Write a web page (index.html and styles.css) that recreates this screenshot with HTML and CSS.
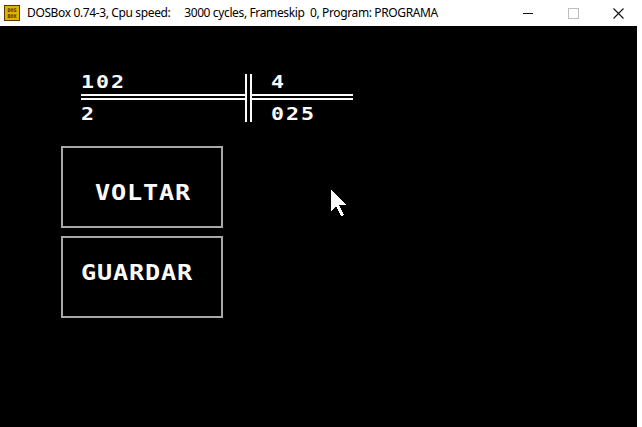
FILE: index.html
```html
<!DOCTYPE html>
<html>
<head>
<meta charset="utf-8">
<link rel="stylesheet" href="styles.css">
</head>
<body>
<div class="window">
  <div class="titlebar">
    <div class="appicon"><span>DOS</span><span>BOX</span></div>
    <div class="title">DOSBox 0.74-3, Cpu speed:     3000 cycles, Frameskip  0, Program: PROGRAMA</div>
    <div class="controls">
      <div class="ctl"><svg width="11" height="11" viewBox="0 0 11 11"><rect x="0" y="5" width="10" height="1" fill="#111"/></svg></div>
      <div class="ctl"><svg width="11" height="11" viewBox="0 0 11 11"><rect x="0.5" y="0.5" width="10" height="10" fill="none" stroke="#bdbdbd"/></svg></div>
      <div class="ctl"><svg width="11" height="11" viewBox="0 0 11 11"><path d="M0.5 0.5 L10.5 10.5 M10.5 0.5 L0.5 10.5" stroke="#111" stroke-width="1.1"/></svg></div>
    </div>
  </div>
  <div class="client">
    <div class="screen">
      <div class="frac">
        <div class="num top-l"><span class="px">102</span></div>
        <div class="bars"></div>
        <div class="num top-r"><span class="px">4</span></div>
        <div class="hline hl-l"></div>
        <div class="hline hl-r"></div>
        <div class="num bot-l"><span class="px">2</span></div>
        <div class="num bot-r"><span class="px">025</span></div>
      </div>
      <div class="buttons">
        <div class="dosbtn btn-voltar"><span class="label"><span class="px">VOLTAR</span></span></div>
        <div class="dosbtn btn-guardar"><span class="label"><span class="px">GUARDAR</span></span></div>
      </div>
      <svg class="cursor" width="16" height="27" viewBox="0 0 16 27" shape-rendering="crispEdges"><polygon points="0,0 0,21 5,16 10,26 13,25 8,15 15,15" fill="#fff"/></svg>
    </div>
  </div>
</div>
</body>
</html>
```

FILE: styles.css
```css
html, body {
  margin: 0;
  padding: 0;
  background: #ffffff;
}
.window {
  width: 642px;
  height: 427px;
  display: flex;
  flex-direction: column;
  overflow: hidden;
}
.titlebar {
  height: 26px;
  flex: 0 0 26px;
  display: flex;
  align-items: center;
  background: #ffffff;
  font-family: "Noto Sans", "Liberation Sans", sans-serif;
  font-size: 12px;
  color: #000;
}
.appicon {
  width: 14px;
  height: 14px;
  margin-left: 4px;
  margin-top: -1px;
  background: #e2b000;
  border: 1px solid #5a3800;
  display: flex;
  flex-direction: column;
  align-items: center;
  justify-content: center;
  font-family: "DejaVu Sans Mono", monospace;
  font-weight: bold;
  font-size: 5px;
  line-height: 6px;
  color: #4a2a00;
}
.title {
  margin-left: 7px;
  white-space: pre;
  line-height: 16px;
  margin-top: -1px;
  letter-spacing: -0.37px;
}
.controls {
  margin-left: auto;
  margin-right: 1px;
  display: flex;
  height: 26px;
}
.ctl {
  width: 45px;
  display: flex;
  align-items: center;
  justify-content: center;
}
.client {
  flex: 1;
  margin-right: 5px;
  background: #000;
}
.screen {
  position: relative;
  height: 100%;
  padding: 47px 0 0 61px;
  box-sizing: border-box;
  font-family: "DejaVu Sans Mono", monospace;
  font-weight: bold;
  color: #fcfcfc;
}
.px {
  display: inline-block;
  transform: scaleX(1.2);
  transform-origin: 0 0;
  white-space: pre;
}
.frac {
  margin-left: 20px;
  display: grid;
  grid-template-columns: 164px 7px 101px;
  grid-template-rows: 21px 6px 22px;
}
.num {
  font-size: 18px;
  line-height: 18px;
  letter-spacing: 1.66px;
}
.top-l { grid-column: 1; grid-row: 1; }
.top-r { grid-column: 3; grid-row: 1; padding-left: 19px; }
.bot-l { grid-column: 1; grid-row: 3; margin-top: 5px; }
.bot-r { grid-column: 3; grid-row: 3; padding-left: 19px; margin-top: 5px; }
.bars {
  grid-column: 2;
  grid-row: 1 / 4;
  margin-top: 1px;
  border-left: 2px solid #fcfcfc;
  border-right: 2px solid #fcfcfc;
}
.hline {
  grid-row: 2;
  border-top: 2px solid #fcfcfc;
  border-bottom: 2px solid #fcfcfc;
}
.hl-l { grid-column: 1; }
.hl-r { grid-column: 3; }
.buttons {
  margin-top: 24px;
  display: flex;
  flex-direction: column;
  gap: 8px;
}
.dosbtn {
  width: 158px;
  height: 78px;
  border: 2px solid #a8a8a8;
}
.label {
  display: block;
  font-size: 21px;
  line-height: 21px;
  letter-spacing: 0.69px;
}
.btn-voltar .label { padding: 35px 0 0 32px; }
.btn-guardar .label { padding: 25px 0 0 18px; }
.cursor {
  position: absolute;
  left: 331px;
  top: 164px;
}
```
